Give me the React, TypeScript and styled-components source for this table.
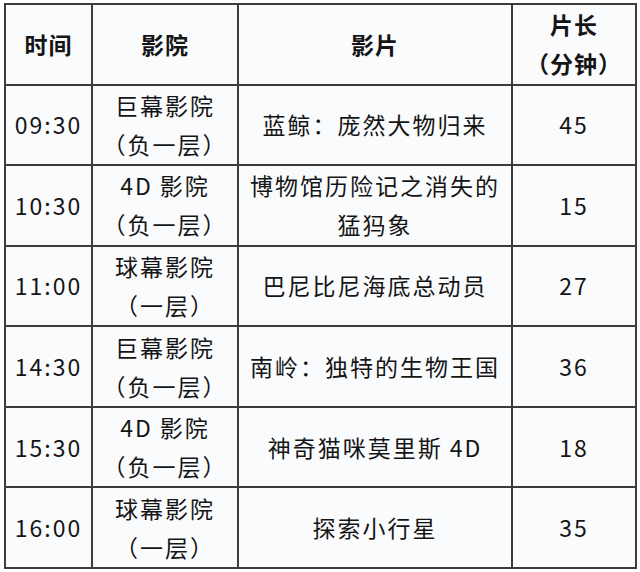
import styled, { createGlobalStyle } from "styled-components";

const GlobalStyle = createGlobalStyle`
    html, body {
        margin: 0;
        padding: 0;
        background: #ffffff;
    }
    body {
        font-family: "Noto Sans CJK SC", "Noto Sans", sans-serif;
        color: #151515;
    }
`;

const Page = styled.div`
    width: 640px;
    height: 572px;
    padding: 3px 0 0 4px;
    box-sizing: border-box;
`;

// the grid background shows through the gaps and makes the ruling lines
const Grid = styled.div`
    display: grid;
    grid-template-columns: 85px 144px 272px 122px;
    grid-template-rows: repeat(7, 1fr);
    gap: 2px;
    padding: 2px;
    width: 633px;
    height: 566px;
    box-sizing: border-box;
    background: #3c3c3c;
`;

const Cell = styled.div<{ $head?: boolean }>`
    display: flex;
    flex-direction: column;
    align-items: center;
    justify-content: center;
    background: #fafbfd;
    font-size: 23px;
    line-height: 39px;
    letter-spacing: ${props => props.$head ? "1px" : "2px"};
    font-weight: ${props => props.$head ? 700 : 400};
    text-align: center;
    white-space: nowrap;
`;

const Line = styled.span`
    display: block;
`;

const rows = [
    ["09:30", ["巨幕影院", "（负一层）"], ["蓝鲸：庞然大物归来"], "45"],
    ["10:30", ["4D 影院", "（负一层）"], ["博物馆历险记之消失的", "猛犸象"], "15"],
    ["11:00", ["球幕影院", "（一层）"], ["巴尼比尼海底总动员"], "27"],
    ["14:30", ["巨幕影院", "（负一层）"], ["南岭：独特的生物王国"], "36"],
    ["15:30", ["4D 影院", "（负一层）"], ["神奇猫咪莫里斯 4D"], "18"],
    ["16:00", ["球幕影院", "（一层）"], ["探索小行星"], "35"],
] as const;

function Lines({ text }: { text: readonly string[] }) {
    return <>{text.map((t, i) => <Line key={i}>{t}</Line>)}</>;
}

export default function App() {
    return <Page>
        <GlobalStyle/>
        <Grid>
            <Cell $head>时间</Cell>
            <Cell $head>影院</Cell>
            <Cell $head>影片</Cell>
            <Cell $head><Lines text={["片长", "（分钟）"]}/></Cell>
            {rows.map(([time, hall, film, mins]) => [
                <Cell key={time + "t"}>{time}</Cell>,
                <Cell key={time + "h"}><Lines text={hall}/></Cell>,
                <Cell key={time + "f"}><Lines text={film}/></Cell>,
                <Cell key={time + "m"}>{mins}</Cell>,
            ])}
        </Grid>
    </Page>;
}
